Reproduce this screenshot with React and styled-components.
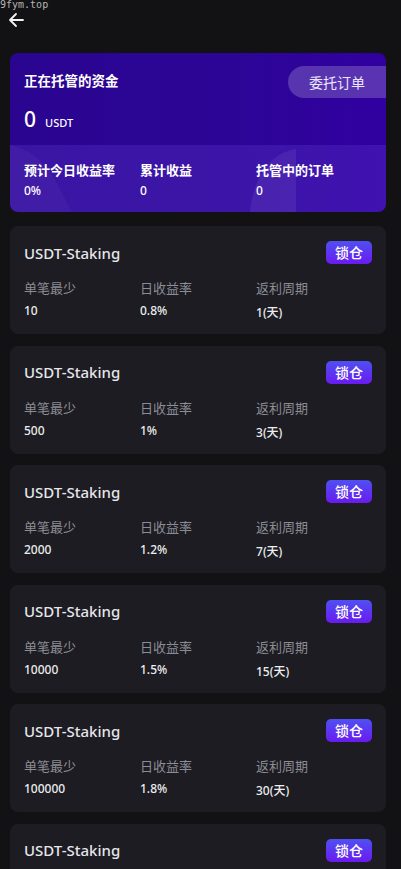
import React from "react"
import styled, { createGlobalStyle } from "styled-components"

const plans = [
  { min: "10", rate: "0.8%", cycle: "1" },
  { min: "500", rate: "1%", cycle: "3" },
  { min: "2000", rate: "1.2%", cycle: "7" },
  { min: "10000", rate: "1.5%", cycle: "15" },
  { min: "100000", rate: "1.8%", cycle: "30" },
  { min: "1000000", rate: "2%", cycle: "60" },
]

const App = () => {
  return (
    <Page>
      <GlobalStyle />
      <Domain>9fym.top</Domain>
      <NavBar>
        <BackIcon viewBox="0 0 16 16">
          <path d="M15 8H2M8 2L2 8l6 6" />
        </BackIcon>
      </NavBar>

      <Summary>
        <Decor viewBox="0 0 376 159" preserveAspectRatio="none">
          <path d="M0 92 C40 100 50 140 62 159 L0 159 Z" fill="rgba(255,255,255,0.04)" />
          <path d="M240 159 C244 120 262 100 286 96 L286 159 Z" fill="rgba(255,255,255,0.08)" />
        </Decor>
        <SummaryTop>
          <TopRow>
            <SummaryTitle>正在托管的资金</SummaryTitle>
            <OrdersButton>委托订单</OrdersButton>
          </TopRow>
          <Amount>
            0<Unit>USDT</Unit>
          </Amount>
        </SummaryTop>
        <SummaryBottom>
          <Stat>
            <StatLabel>预计今日收益率</StatLabel>
            <StatValue>0%</StatValue>
          </Stat>
          <Stat>
            <StatLabel>累计收益</StatLabel>
            <StatValue>0</StatValue>
          </Stat>
          <Stat>
            <StatLabel>托管中的订单</StatLabel>
            <StatValue>0</StatValue>
          </Stat>
        </SummaryBottom>
      </Summary>

      <PlanList>
        {plans.map((p, i) => (
          <PlanCard key={i}>
            <PlanHead>
              <PlanTitle>USDT-Staking</PlanTitle>
              <LockButton>锁仓</LockButton>
            </PlanHead>
            <PlanGrid>
              <Cell>
                <CellLabel>单笔最少</CellLabel>
                <CellValue>{p.min}</CellValue>
              </Cell>
              <Cell>
                <CellLabel>日收益率</CellLabel>
                <CellValue>{p.rate}</CellValue>
              </Cell>
              <Cell>
                <CellLabel>返利周期</CellLabel>
                <CellValue $shift>{p.cycle}(天)</CellValue>
              </Cell>
            </PlanGrid>
          </PlanCard>
        ))}
      </PlanList>
    </Page>
  )
}

export default App

const GlobalStyle = createGlobalStyle`
  html, body {
    margin: 0;
    padding: 0;
    background: #121214;
    font-family: "Noto Sans", "Noto Sans CJK SC", sans-serif;
  }
  ::-webkit-scrollbar {
    display: none;
  }
  * {
    box-sizing: border-box;
  }
`

const Page = styled.div`
  background: #121214;
  min-height: 869px;
  padding: 0 15px 20px 10px;
`

const Domain = styled.div`
  height: 11px;
  margin-left: -10px;
  font-family: "DejaVu Sans Mono", monospace;
  font-size: 10px;
  line-height: 10px;
  color: #b4b4b4;
  overflow: hidden;
`

const NavBar = styled.div`
  height: 42px;
  padding-top: 1px;
`

const BackIcon = styled.svg`
  display: block;
  width: 16px;
  height: 16px;
  margin-left: -2px;
  fill: none;
  stroke: #f2f2f2;
  stroke-width: 1.8;
  stroke-linecap: round;
  stroke-linejoin: round;
`

const Summary = styled.section`
  position: relative;
  height: 159px;
  border-radius: 8px;
  overflow: hidden;
  background: linear-gradient(90deg, #2a0590 0%, #2c0596 60%, #3100a0 100%);
`

const Decor = styled.svg`
  position: absolute;
  inset: 0;
  width: 100%;
  height: 100%;
  pointer-events: none;
`

const SummaryTop = styled.div`
  position: relative;
  height: 92px;
  padding: 13px 0 0 14px;
`

const TopRow = styled.div`
  display: flex;
  align-items: center;
  justify-content: space-between;
  height: 32px;
`

const SummaryTitle = styled.h2`
  margin: 0;
  height: 20px;
  font-size: 13.5px;
  line-height: 18px;
  font-weight: 700;
  color: #ffffff;
`

const OrdersButton = styled.button`
  width: 98px;
  height: 32px;
  border: none;
  border-radius: 16px 0 0 16px;
  background: rgba(255, 255, 255, 0.2);
  color: #ece6ff;
  font-family: inherit;
  font-size: 14px;
  padding: 0;
`

const Amount = styled.div`
  margin-top: 10px;
  height: 22px;
  display: flex;
  align-items: baseline;
  font-size: 21px;
  line-height: 22px;
  font-weight: 500;
  color: #ffffff;
`

const Unit = styled.span`
  margin-left: 9px;
  font-size: 11px;
  font-weight: 500;
`

const SummaryBottom = styled.div`
  position: relative;
  height: 67px;
  display: grid;
  grid-template-columns: repeat(3, 1fr);
  align-content: start;
  padding: 16px 14px 0;
  background: rgba(120, 80, 230, 0.22);
`

const Stat = styled.div`
  display: flex;
  flex-direction: column;
  gap: 3px;
`

const StatLabel = styled.span`
  display: block;
  height: 18px;
  font-size: 13px;
  line-height: 18px;
  font-weight: 700;
  color: #ffffff;
  white-space: nowrap;
`

const StatValue = styled.span`
  display: block;
  height: 18px;
  font-size: 12px;
  line-height: 18px;
  font-weight: 500;
  color: #ffffff;
`

const PlanList = styled.div`
  display: flex;
  flex-direction: column;
  gap: 11.6px;
  margin-top: 14px;
`

const PlanCard = styled.div`
  height: 108px;
  background: #1c1c22;
  border-radius: 8px;
  padding: 15px 14px 0;
`

const PlanHead = styled.div`
  display: flex;
  align-items: center;
  justify-content: space-between;
  height: 23px;
`

const PlanTitle = styled.h3`
  margin: 0;
  height: 22px;
  font-size: 15px;
  line-height: 22px;
  font-weight: 500;
  color: #e6e6ea;
`

const LockButton = styled.button`
  width: 46px;
  height: 23px;
  border: none;
  border-radius: 5px;
  padding: 0;
  background: linear-gradient(180deg, #4f50f2 0%, #6a1af0 100%);
  color: #ffffff;
  font-family: inherit;
  font-size: 14px;
  line-height: 23px;
  font-weight: 500;
`

const PlanGrid = styled.div`
  display: grid;
  grid-template-columns: repeat(3, 1fr);
  margin-top: 15px;
`

const Cell = styled.div`
  display: flex;
  flex-direction: column;
  gap: 5px;
`

const CellLabel = styled.span`
  display: block;
  height: 18px;
  font-size: 13px;
  line-height: 18px;
  color: #8c8c94;
`

const CellValue = styled.span`
  display: block;
  height: 18px;
  font-size: 12px;
  line-height: 18px;
  font-weight: 500;
  color: #ececee;
  margin-top: ${(p) => (p.$shift ? "2px" : "0")};
`
